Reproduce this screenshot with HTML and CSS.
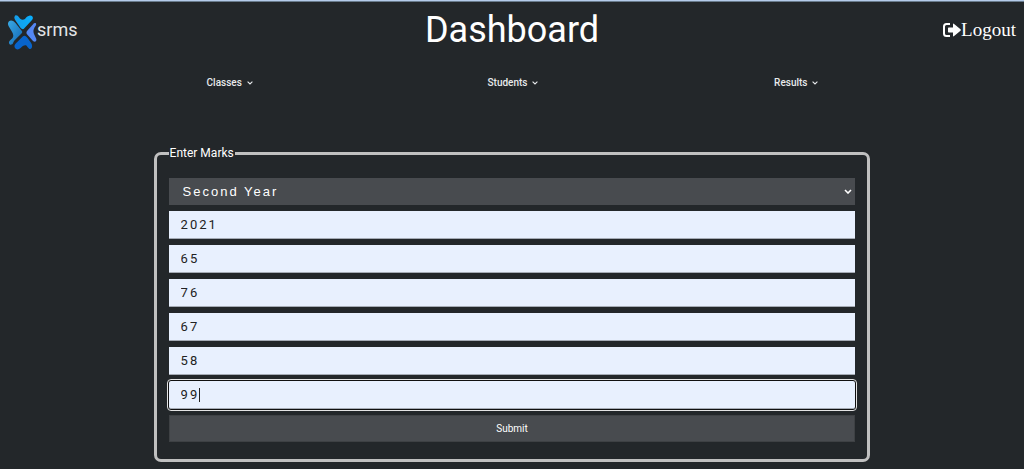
FILE: index.html
```html
<!DOCTYPE html>
<html lang="en">
<head>
<meta charset="utf-8">
<meta name="viewport" content="width=device-width, initial-scale=1">
<title>Dashboard</title>
<link rel="stylesheet" href="styles.css">
</head>
<body>
<header class="header">
  <a class="brand" href="#">
    <svg class="brand-mark" viewBox="0 0 87 105" aria-hidden="true">
      <defs>
        <linearGradient id="left" x1="0" y1="0" x2="1" y2="1"><stop offset="0" stop-color="#39a9e4"/><stop offset="1" stop-color="#1266b4"/></linearGradient>
        <linearGradient id="top" x1="0" y1="0" x2="1" y2="0"><stop offset="0" stop-color="#159ce8"/><stop offset="1" stop-color="#08b0ff"/></linearGradient>
      </defs>
      <path fill="url(#top)" d="M21 2C25-1 30 2 33 7C37 15 45 16 51 12C54 8 57 3 64 2C73 0 78 8 72 15L49 40C46 44 41 43 38 39L23 17C18 11 18 6 21 2Z"/>
      <path fill="url(#left)" d="M3 19C9 14 18 18 23 25L41 47C44 51 43 54 39 57L26 70C19 76 17 80 15 85C12 91 4 91 3 84C2 78 9 75 13 70C18 64 16 57 11 49L2 34C-1 28-1 23 3 19Z"/>
      <path fill="#5487f4" d="M80 24C85 23 86 29 82 34C76 43 75 49 78 57L84 70C88 78 81 84 75 78L57 58C54 54 55 50 59 46L74 29Q77 25 80 24Z"/>
      <path fill="#0864cc" d="M45 64C49 60 54 63 58 68L69 83C73 89 73 95 71 99C67 106 61 100 58 95C54 88 47 90 41 96C33 105 25 105 21 99C17 93 21 87 27 82Z"/>
    </svg>
    <span class="brand-name">srms</span>
  </a>
  <h1 class="title">Dashboard</h1>
  <a class="logout" href="#">
    <svg class="logout-icon" viewBox="0 0 18 14" aria-hidden="true">
      <path fill="none" stroke="#fff" stroke-width="2" d="M7 1H3.5Q1 1 1 3.5V10.5Q1 13 3.5 13H7"/>
      <path fill="#fff" d="M5 5.2Q5 4.5 5.7 4.5H10V1.4Q10 0 11.1 .9L17.5 6.3Q18.2 7 17.5 7.7L11.1 13.1Q10 14 10 12.6V9.5H5.7Q5 9.5 5 8.8Z"/>
    </svg>
    <span>Logout</span>
  </a>
</header>
<nav class="nav">
  <button class="nav-item" type="button">Classes <svg class="chevron" viewBox="0 0 6 4" aria-hidden="true"><path d="M.6.6L3 3L5.4.6"/></svg></button>
  <button class="nav-item" type="button">Students <svg class="chevron" viewBox="0 0 6 4" aria-hidden="true"><path d="M.6.6L3 3L5.4.6"/></svg></button>
  <button class="nav-item" type="button">Results <svg class="chevron" viewBox="0 0 6 4" aria-hidden="true"><path d="M.6.6L3 3L5.4.6"/></svg></button>
</nav>
<main class="main">
  <form>
    <fieldset class="marks">
      <legend class="legend">Enter Marks</legend>
      <div class="fields">
        <div class="select-wrap">
          <select class="field select" aria-label="Class"><option>Second Year</option></select>
          <svg class="select-arrow" viewBox="0 0 8 5" aria-hidden="true"><path d="M1 1L4 4L7 1"/></svg>
        </div>
        <input class="field input" type="text" value="2021" aria-label="Roll number">
        <input class="field input" type="text" value="65" aria-label="Paper 1">
        <input class="field input" type="text" value="76" aria-label="Paper 2">
        <input class="field input" type="text" value="67" aria-label="Paper 3">
        <input class="field input" type="text" value="58" aria-label="Paper 4">
        <div class="active-wrap">
          <input class="field input active" type="text" value="99" aria-label="Paper 5">
          <span class="caret"></span>
        </div>
        <button class="submit" type="submit">Submit</button>
      </div>
    </fieldset>
  </form>
</main>
</body>
</html>
```

FILE: styles.css
```css
* { box-sizing: border-box; }
body {
  margin: 0;
  background: #23272a;
  color: #fff;
  font-family: Roboto, "Liberation Sans", sans-serif;
  border-top: 1px solid #b4cbea;
}
.header {
  display: grid;
  grid-template-columns: 1fr auto 1fr;
  align-items: center;
  height: 56px;
  padding: 0 8px;
  border-top: 1px solid #6a7c8d;
}
.brand, .logout {
  display: flex;
  align-items: center;
  color: #fff;
  text-decoration: none;
}
.brand-mark { width: 29px; height: 35px; margin-top: 6px; }
.brand-name { font-size: 18px; line-height: 24px; color: #e4e6e8; }
.title { margin: 0; font-size: 36px; font-weight: 400; line-height: 44px; }
.logout {
  justify-self: end;
  font-family: "Liberation Serif", serif;
  font-size: 19px;
  line-height: 24px;
}
.logout-icon { width: 18px; height: 14px; }
.nav {
  display: grid;
  grid-template-columns: repeat(3, 1fr);
  width: 83%;
  margin: 18px auto 0;
}
.nav-item {
  display: flex;
  align-items: center;
  justify-content: center;
  gap: 5px;
  padding: 0 0 0 2px;
  border: 0;
  background: none;
  color: #e8eaec;
  font: 500 10px/16px Roboto, sans-serif;
}
.chevron { width: 6px; height: 4px; fill: none; stroke: #e8eaec; stroke-width: 1.1; }
.main { width: 70%; margin: 54px auto 0; }
.marks {
  margin: 0;
  padding: 0 12px 17px;
  border: 3px solid #c0c0c0;
  border-radius: 7px;
}
.legend { padding: 0 1px; font-size: 12px; line-height: 16px; }
.fields { display: flex; flex-direction: column; gap: 6px; padding-top: 17px; }
.select-wrap, .active-wrap { position: relative; display: flex; }
.field {
  width: 100%;
  height: 28px;
  margin: 0;
  padding: 0 12px;
  border: 0;
  border-radius: 0;
  font: 13px/20px Roboto, "Liberation Sans", sans-serif;
  letter-spacing: 2px;
}
.select {
  appearance: none;
  height: 27px;
  padding: 0 14px;
  background: #484b4f;
  color: #fff;
  font-family: "Liberation Sans", sans-serif;
}
.select-arrow {
  position: absolute;
  right: 3px;
  top: 11px;
  width: 8px;
  height: 5px;
  fill: none;
  stroke: #fff;
  stroke-width: 1.6;
  pointer-events: none;
}
.input { background: #e8f0fe; color: #222; border-bottom: 1px solid #a5abb5; }
.active {
  outline: 1px solid #e4e4e4;
  outline-offset: 1px;
  border-radius: 2px;
  box-shadow: 0 0 0 1px #101010;
}
.caret { position: absolute; left: 30px; top: 7px; width: 1px; height: 14px; background: #222; }
.submit {
  height: 27px;
  padding: 0;
  border: 1px solid #3e4144;
  background: #484b4f;
  color: #fff;
  font: 10px/16px Roboto, sans-serif;
}
```
